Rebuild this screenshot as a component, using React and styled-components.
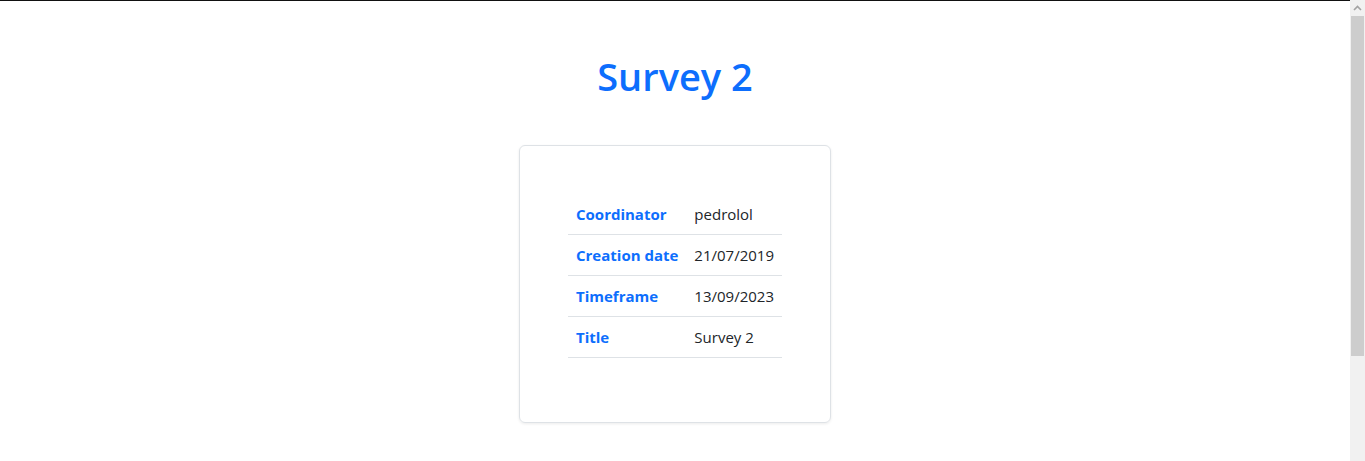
import React from 'react';
import styled, { createGlobalStyle } from 'styled-components';

const GlobalStyle = createGlobalStyle`
  html, body {
    margin: 0;
    padding: 0;
    background: #fff;
  }
  body {
    font-family: "Open Sans", "Noto Sans", sans-serif;
    color: #212529;
    border-top: 1px solid #111;
  }
`;

const Page = styled.main`
  display: flex;
  flex-direction: column;
  align-items: center;
  width: 1350px;
  min-height: 600px;
  padding-top: 51px;
  box-sizing: border-box;
`;

const Heading = styled.h1`
  margin: 0 0 45px;
  font-size: 38px;
  line-height: 48px;
  font-weight: 600;
  color: #0d6efd;
`;

const Card = styled.section`
  width: 312px;
  box-sizing: border-box;
  padding: 48px;
  border: 1px solid #dee2e6;
  border-radius: 6px;
  box-shadow: 0 1px 3px rgba(0, 0, 0, 0.08);
`;

const Table = styled.table`
  width: 100%;
  border-collapse: collapse;
  margin-bottom: 16px;
  font-size: 15px;
`;

const Row = styled.tr`
  border-bottom: 1px solid #dee2e6;
`;

const Cell = styled.td`
  padding: 8px;
  line-height: 24px;
  white-space: nowrap;
  color: ${p => (p.$label ? '#0d6efd' : '#212529')};
  font-weight: ${p => (p.$label ? 700 : 400)};
`;

/* stand-in for the browser's vertical scrollbar */
const Scrollbar = styled.div`
  position: fixed;
  top: 0;
  right: 0;
  bottom: 0;
  width: 15px;
  background: #f1f1f1;
  display: flex;
  flex-direction: column;
`;

const ScrollArrow = styled.div`
  height: 16px;
  display: flex;
  align-items: center;
  justify-content: center;
`;

const Thumb = styled.div`
  height: 340px;
  margin: 0 1px;
  background: #cdcdcd;
`;

const rows = [
  ['Coordinator', 'pedrolol'],
  ['Creation date', '21/07/2019'],
  ['Timeframe', '13/09/2023'],
  ['Title', 'Survey 2'],
];

export default function App() {
  return (
    <>
      <GlobalStyle />
      <Page>
        <Heading>Survey 2</Heading>
        <Card>
          <Table>
            <tbody>
              {rows.map(([k, v]) => (
                <Row key={k}>
                  <Cell $label>{k}</Cell>
                  <Cell>{v}</Cell>
                </Row>
              ))}
            </tbody>
          </Table>
        </Card>
      </Page>
      <Scrollbar>
        <ScrollArrow>
          <svg width="9" height="6" viewBox="0 0 9 6">
            <path d="M1 5 L4.5 1.5 L8 5" fill="none" stroke="#a3a3a3" strokeWidth="1.6" />
          </svg>
        </ScrollArrow>
        <Thumb />
      </Scrollbar>
    </>
  );
}
